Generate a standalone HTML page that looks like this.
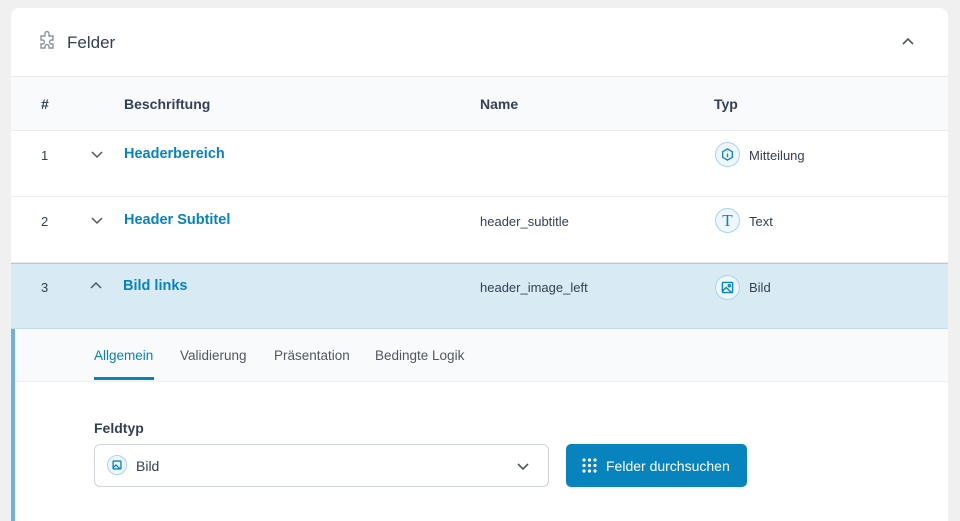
<!DOCTYPE html>
<html><head><style>
*{box-sizing:border-box;margin:0;padding:0}
html,body{width:960px;height:521px;overflow:hidden}
body{background:#f0f0f1;font-family:"Liberation Sans",sans-serif;position:relative;color:#1d2327}
.card{position:absolute;left:11px;top:8px;width:937px;height:513px;background:#fff;border-radius:8px 8px 0 0;overflow:hidden}
.hdr{height:69px;position:relative;border-bottom:1px solid #e8eaed}
.hdr span{position:absolute;left:56px;top:25px;font-size:17px;color:#344054}
.th{height:54px;background:#f9fafb;border-bottom:1px solid #e8eaed;position:relative;font-size:14px;font-weight:bold;color:#344054}
.row{height:66px;border-bottom:1px solid #e8eaed;position:relative;font-size:13px;color:#344054}
.abs{position:absolute}
.lbl{font-size:14.5px;font-weight:bold;color:#0783be}
.ic{position:absolute;left:704px;width:25px;height:25px;border-radius:50%;background:#eef6fb;border:1px solid #a9d4ec;display:flex;align-items:center;justify-content:center;color:#0783be}
.sel{background:#d8eaf4;border-bottom:1px solid #c2dbe8;border-top:1px solid #a9cde3}
.exp{position:absolute;left:0;top:321px;width:937px;height:192px;border-left:4px solid #72aee6}
.tabs{height:53px;background:#f9fafb;border-bottom:1px solid #eceef1;position:relative;font-size:13.5px;color:#50575e}
.tabs span{position:absolute;top:19px}
</style></head><body>
<div class="card">
 <div class="hdr">
  <svg class="abs" style="left:25px;top:22px" width="24" height="24" viewBox="0 0 24 24" fill="none" stroke="#8c94a1" stroke-width="1.4"><path d="M9 3.5a2 2 0 014 0V6h4v4h-1.5a2 2 0 000 4H17v4h-4v-1.5a2 2 0 00-4 0V18H5v-4h1.5a2 2 0 000-4H5V6h4z"/></svg>
  <span>Felder</span>
  <svg class="abs" style="left:889px;top:26px" width="16" height="16" viewBox="0 0 16 16" fill="none" stroke="#50575e" stroke-width="1.6"><path d="M3 10l5-5 5 5"/></svg>
 </div>
 <div class="th">
  <span class="abs" style="left:30px;top:19px">#</span>
  <span class="abs" style="left:113px;top:19px">Beschriftung</span>
  <span class="abs" style="left:469px;top:19px">Name</span>
  <span class="abs" style="left:703px;top:19px">Typ</span>
 </div>
 <div class="row">
  <span class="abs" style="left:30px;top:17px">1</span>
  <svg class="abs" style="left:79px;top:16px" width="14" height="14" viewBox="0 0 14 14" fill="none" stroke="#50575e" stroke-width="1.5"><path d="M2 5l5 5 5-5"/></svg>
  <span class="abs lbl" style="left:113px;top:15px">Headerbereich</span>
  <div class="ic" style="top:11px"><svg width="13" height="13" viewBox="0 0 14 14" fill="none" stroke="#0783be" stroke-width="1.4"><path d="M7 1l5.2 3v6L7 13 1.8 10V4z"/><path d="M7 6v4M7 4v.5"/></svg></div>
  <span class="abs" style="left:738px;top:17px">Mitteilung</span>
 </div>
 <div class="row">
  <span class="abs" style="left:30px;top:17px">2</span>
  <svg class="abs" style="left:79px;top:16px" width="14" height="14" viewBox="0 0 14 14" fill="none" stroke="#50575e" stroke-width="1.5"><path d="M2 5l5 5 5-5"/></svg>
  <span class="abs lbl" style="left:113px;top:15px">Header Subtitel</span>
  <span class="abs" style="left:469px;top:17px">header_subtitle</span>
  <div class="ic" style="top:11px;font-family:'Liberation Serif',serif;font-size:17px">T</div>
  <span class="abs" style="left:738px;top:17px">Text</span>
 </div>
 <div class="row sel">
  <span class="abs" style="left:30px;top:16px">3</span>
  <svg class="abs" style="left:78px;top:15px" width="14" height="14" viewBox="0 0 14 14" fill="none" stroke="#50575e" stroke-width="1.5"><path d="M2 9l5-5 5 5"/></svg>
  <span class="abs lbl" style="left:112px;top:14px">Bild links</span>
  <span class="abs" style="left:469px;top:16px">header_image_left</span>
  <div class="ic" style="top:11px"><svg width="13" height="13" viewBox="0 0 14 14" fill="none" stroke="#0783be" stroke-width="1.5"><rect x="1.5" y="1.5" width="11" height="11" rx="1"/><path d="M1.5 11l4-4 6 5.5"/><circle cx="9" cy="5" r="1.2"/></svg></div>
  <span class="abs" style="left:738px;top:16px">Bild</span>
 </div>
 <div class="exp">
  <div class="tabs">
   <span style="left:79px;color:#0783be">Allgemein</span>
   <div class="abs" style="left:79px;top:48px;width:60px;height:3px;background:#0783be"></div>
   <span style="left:165px">Validierung</span>
   <span style="left:259px">Präsentation</span>
   <span style="left:360px">Bedingte Logik</span>
  </div>
  <span class="abs" style="left:79px;top:91px;font-size:14px;font-weight:bold;color:#344054">Feldtyp</span>
  <div class="abs" style="left:79px;top:115px;width:455px;height:43px;border:1px solid #d0d5dd;border-radius:6px">
   <div class="ic" style="left:12px;top:10px;width:20px;height:20px"><svg width="10" height="10" viewBox="0 0 14 14" fill="none" stroke="#0783be" stroke-width="1.8"><rect x="1.5" y="1.5" width="11" height="11" rx="1"/><path d="M1.5 11l4-4 6 5.5"/></svg></div>
   <span class="abs" style="left:41px;top:13px;font-size:14px;color:#344054">Bild</span>
   <svg class="abs" style="left:421px;top:14px" width="14" height="14" viewBox="0 0 14 14" fill="none" stroke="#50575e" stroke-width="1.6"><path d="M2 5l5 5 5-5"/></svg>
  </div>
  <div class="abs" style="left:551px;top:115px;width:181px;height:43px;background:#0783be;border-radius:5px;color:#fff;font-size:14px">
   <svg class="abs" style="left:16px;top:14px" width="15" height="15" viewBox="0 0 15 15" fill="#fff"><circle cx="2" cy="2" r="1.6"/><circle cx="7.5" cy="2" r="1.6"/><circle cx="13" cy="2" r="1.6"/><circle cx="2" cy="7.5" r="1.6"/><circle cx="7.5" cy="7.5" r="1.6"/><circle cx="13" cy="7.5" r="1.6"/><circle cx="2" cy="13" r="1.6"/><circle cx="7.5" cy="13" r="1.6"/><circle cx="13" cy="13" r="1.6"/></svg>
   <span class="abs" style="left:40px;top:14px">Felder durchsuchen</span>
  </div>
 </div>
</div>
</body></html>
